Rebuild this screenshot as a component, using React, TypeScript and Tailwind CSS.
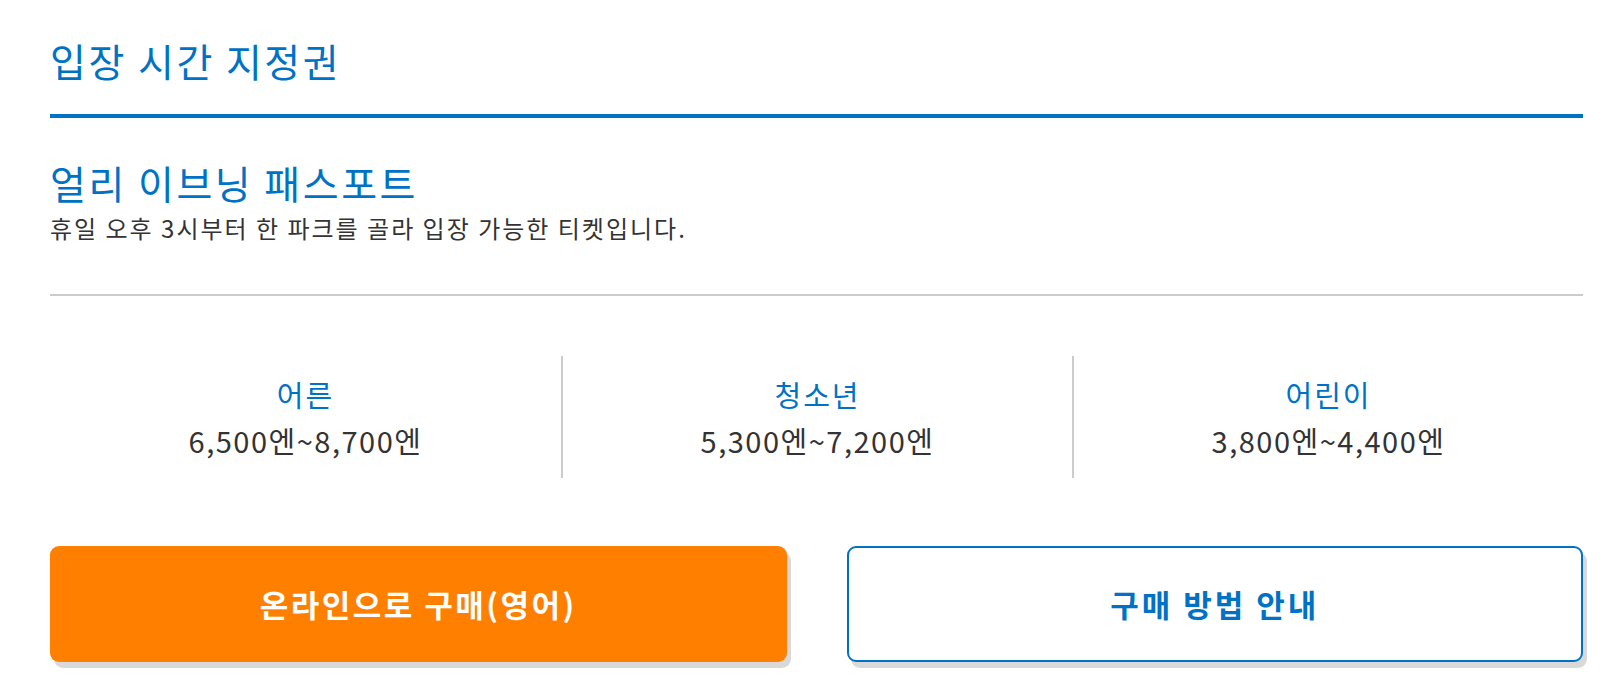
import React from 'react';

const prices = [
  { label: '어른', value: '6,500엔~8,700엔' },
  { label: '청소년', value: '5,300엔~7,200엔' },
  { label: '어린이', value: '3,800엔~4,400엔' },
];

export default function App() {
  return (
    <div
      className="min-h-screen bg-white"
      style={{ fontFamily: '"Noto Sans CJK KR", "Noto Sans", sans-serif' }}
    >
      <div className="ml-[50px] w-[1533px] pt-[36px]">
        {/* Section title */}
        <h2 className="text-[39px] leading-[48px] font-normal tracking-[2.5px] text-[#0072c6]">입장 시간 지정권</h2>
        <div className="mt-[30px] h-[4px] bg-[#0072c6]" />

        {/* Ticket */}
        <h3 className="mt-[40px] text-[39px] leading-[48px] font-normal tracking-[2.5px] text-[#0072c6]">얼리 이브닝 패스포트</h3>
        <p className="mt-[6px] text-[24px] leading-[32px] tracking-[2px] text-[#333333]">
          휴일 오후 3시부터 한 파크를 골라 입장 가능한 티켓입니다.
        </p>
        <div className="mt-[50px] h-[2px] bg-[#cccccc]" />

        {/* Prices */}
        <div className="mt-[60px] grid grid-cols-3">
          {prices.map((p, i) => (
            <div
              key={p.label}
              className={
                'flex h-[122px] flex-col items-center justify-center gap-[10px]' +
                (i > 0 ? ' border-l-2 border-[#cccccc]' : '')
              }
            >
              <div className="text-[29px] leading-[36px] tracking-[2px] text-[#0072c6]">{p.label}</div>
              <div className="text-[29px] leading-[36px] tracking-[1.5px] text-[#333333]">{p.value}</div>
            </div>
          ))}
        </div>

        {/* Buttons */}
        <div className="mt-[68px] grid grid-cols-2 gap-[60px]">
          <button className="flex h-[116px] items-center justify-center rounded-[9px] bg-[#ff8000] text-[31px] font-bold tracking-[2.5px] text-white shadow-[4px_6px_0_#d9d9d9]">
            온라인으로 구매(영어)
          </button>
          <button className="flex h-[116px] items-center justify-center rounded-[9px] border-2 border-[#0072c6] bg-white text-[31px] font-bold tracking-[3px] text-[#0072c6] shadow-[4px_6px_0_#d9d9d9]">
            구매 방법 안내
          </button>
        </div>
      </div>
    </div>
  );
}
